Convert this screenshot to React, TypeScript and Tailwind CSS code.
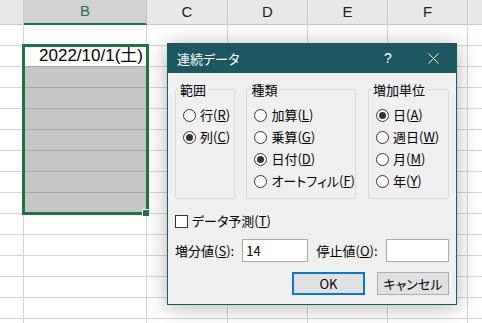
import React from "react";

const cols = [
  { key: "A", w: "w-[24px]" },
  { key: "B", w: "w-[123px]" },
  { key: "C", w: "w-[81px]" },
  { key: "D", w: "w-[80px]" },
  { key: "E", w: "w-[80px]" },
  { key: "F", w: "w-[80px]" },
  { key: "G", w: "w-[40px]" },
];

const rows = Array.from({ length: 15 }, (_, i) => i + 1);

function Radio({ checked }: { checked?: boolean }) {
  return (
    <span className="flex h-[13px] w-[13px] shrink-0 items-center justify-center rounded-full border border-[#333] bg-white">
      {checked && <span className="h-[7px] w-[7px] rounded-full bg-[#333]" />}
    </span>
  );
}

function Label({ text, k }: { text: string; k: string }) {
  return (
    <span className="whitespace-nowrap">
      {text}(<span className="underline underline-offset-[1px]">{k}</span>)
    </span>
  );
}

function Option({ text, k, checked }: { text: string; k: string; checked?: boolean }) {
  return (
    <div className="flex h-[22px] items-center gap-[4px]">
      <Radio checked={checked} />
      <Label text={text} k={k} />
    </div>
  );
}

function Group({ title, width, children }: { title: string; width: string; children: React.ReactNode }) {
  return (
    <fieldset className={`${width} h-[116px] border border-[#dcdcdc] pl-[7px] pt-[8px]`}>
      <legend className="ml-[-4px] px-[1px] leading-[13px]">{title}</legend>
      {children}
    </fieldset>
  );
}

function SeriesDialog() {
  return (
    <div className="absolute left-[167px] top-[43px] flex h-[262px] w-[290px] flex-col border border-[#1d5860] bg-[#f0f0f0] text-[13px] text-black shadow-[0_2px_20px_rgba(0,0,0,0.3)] font-['Noto_Sans_CJK_JP',sans-serif] [font-feature-settings:'palt']">
      <div className="flex h-[29px] items-center bg-[#1d5860] text-white">
        <span className="pl-[9px]">連続データ</span>
        <span className="flex-1" />
        <span className="flex w-[46px] justify-center font-['Liberation_Sans',sans-serif] text-[14px]">?</span>
        <span className="flex w-[45px] justify-center">
          <svg width="11" height="11" viewBox="0 0 11 11">
            <path d="M0.5 0.5 L10.5 10.5 M10.5 0.5 L0.5 10.5" stroke="white" strokeWidth="1" />
          </svg>
        </span>
      </div>

      <div className="flex flex-col px-[7px] pt-[10px]">
        <div className="flex">
          <Group title="範囲" width="w-[66px]">
            <Option text="行" k="R" />
            <Option text="列" k="C" checked />
          </Group>
          <div className="ml-[11px]">
            <Group title="種類" width="w-[104px]">
              <Option text="加算" k="L" />
              <Option text="乗算" k="G" />
              <Option text="日付" k="D" checked />
              <Option text="オートフィル" k="F" />
            </Group>
          </div>
          <div className="ml-[12px]">
            <Group title="増加単位" width="w-[81px]">
              <Option text="日" k="A" checked />
              <Option text="週日" k="W" />
              <Option text="月" k="M" />
              <Option text="年" k="Y" />
            </Group>
          </div>
        </div>

        <div className="mt-[12px] flex h-[20px] items-center gap-[4px]">
          <span className="h-[13px] w-[13px] border border-[#333] bg-white" />
          <Label text="データ予測" k="T" />
        </div>

        <div className="mt-[8px] flex h-[23px] items-center">
          <span className="w-[68px] whitespace-nowrap">
            増分値(<span className="underline underline-offset-[1px]">S</span>):
          </span>
          <div className="flex h-[23px] w-[66px] items-center border border-[#a9a9a9] bg-white pl-[3px]">14</div>
          <span className="ml-[9px] w-[70px] whitespace-nowrap">
            停止値(<span className="underline underline-offset-[1px]">O</span>):
          </span>
          <div className="h-[23px] w-[64px] border border-[#a9a9a9] bg-white" />
        </div>

        <div className="mt-[10px] flex justify-end gap-[12px]">
          <button className="flex h-[23px] w-[73px] items-center justify-center border-2 border-[#0078d7] bg-[#e1e1e1]">
            OK
          </button>
          <button className="flex h-[23px] w-[72px] items-center justify-center border border-[#adadad] bg-[#e1e1e1]">
            キャンセル
          </button>
        </div>
      </div>
    </div>
  );
}

export default function App() {
  return (
    <div className="relative h-[323px] w-[482px] overflow-hidden bg-white font-['Liberation_Sans','Noto_Sans_CJK_JP',sans-serif]">
      <div className="flex h-[25px]">
        {cols.map((c) =>
          c.key === "B" ? (
            <div
              key={c.key}
              className={`${c.w} flex shrink-0 items-center justify-center border-r border-b-2 border-r-[#c8c8c8] border-b-[#217346] bg-[#d2d2d2] text-[15px] text-[#217346]`}
            >
              B
            </div>
          ) : (
            <div
              key={c.key}
              className={`${c.w} flex shrink-0 items-center justify-center border-r border-b border-[#c8c8c8] bg-[#e9e9e9] text-[15px] text-[#222]`}
            >
              {c.key === "A" || c.key === "G" ? "" : c.key}
            </div>
          )
        )}
      </div>

      {rows.map((r) => (
        <div key={r} className="flex h-[21px]">
          {cols.map((c) => {
            if (c.key === "B" && r >= 2 && r <= 9) {
              const gray = r >= 3;
              return (
                <div
                  key={c.key}
                  className={`${c.w} flex shrink-0 items-center justify-end border-r border-b pr-[3px] text-[17px] ${
                    gray ? "bg-[#c6c6c6]" : "bg-white"
                  } border-[#a6a6a6]`}
                >
                  {r === 2 ? "2022/10/1(土)" : ""}
                </div>
              );
            }
            return <div key={c.key} className={`${c.w} shrink-0 border-r border-b border-[#d4d4d4]`} />;
          })}
        </div>
      ))}

      <div className="absolute left-[22px] top-[44px] h-[171px] w-[127px] border-[3px] border-[#217346]" />
      <div className="absolute left-[142px] top-[209px] h-[7px] w-[7px] border-l border-t border-white bg-[#217346]" />

      <SeriesDialog />
    </div>
  );
}
